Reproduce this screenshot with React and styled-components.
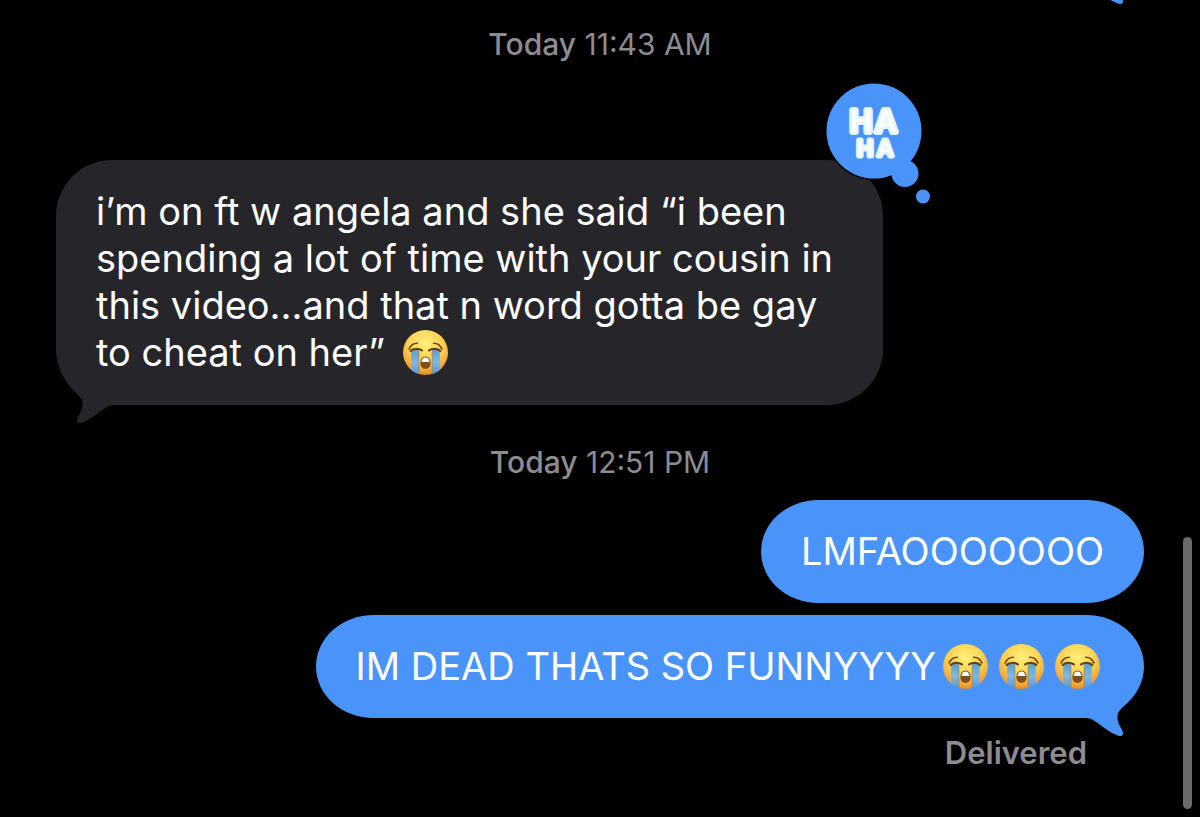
import styled, { createGlobalStyle } from "styled-components";

const messages = [
  { id: 1, type: "time", day: "Today", time: "11:43 AM" },
  {
    id: 2,
    type: "received",
    lines: [
      "i’m on ft w angela and she said “i been",
      "spending a lot of time with your cousin in",
      "this video...and that n word gotta be gay",
      "to cheat on her” ",
    ],
    emojis: 1,
    reaction: true,
    tail: true,
  },
  { id: 3, type: "time", day: "Today", time: "12:51 PM" },
  { id: 4, type: "sent", lines: ["LMFAOOOOOOO"], emojis: 0 },
  {
    id: 5,
    type: "sent",
    lines: ["IM DEAD THATS SO FUNNYYYY"],
    emojis: 3,
    tail: true,
  },
];

const CryingFace = () => (
  <EmojiIcon viewBox="0 0 44 44" role="img" aria-label="loudly crying face">
    <defs>
      <radialGradient id="face" cx="0.5" cy="0.3" r="0.72">
        <stop offset="0" stopColor="#fff07a" />
        <stop offset="0.55" stopColor="#fbd050" />
        <stop offset="0.85" stopColor="#f2a336" />
        <stop offset="1" stopColor="#d98225" />
      </radialGradient>
      <linearGradient id="tear" x1="0" y1="0" x2="0" y2="1">
        <stop offset="0" stopColor="#5a9fd6" />
        <stop offset="0.5" stopColor="#7cb9e6" />
        <stop offset="1" stopColor="#5594dc" />
      </linearGradient>
      <clipPath id="faceClip">
        <circle cx="22" cy="22" r="22" />
      </clipPath>
    </defs>
    <circle cx="22" cy="22" r="22" fill="url(#face)" />
    <g clipPath="url(#faceClip)">
      <path d="M8 19.5H15.5V44H8Z" fill="url(#tear)" />
      <path d="M28.5 19.5H36V44H28.5Z" fill="url(#tear)" />
      <path d="M15.5 21V43M28.5 21V43" stroke="#a87f4c" strokeWidth="0.8" />
    </g>
    <g fill="none" stroke="#6b4212" strokeLinecap="round">
      <path d="M6 18.5C7.5 15 10.5 13 14 13" strokeWidth="1.6" />
      <path d="M38 18.5C36.5 15 33.5 13 30 13" strokeWidth="1.6" />
      <path d="M7.5 20.5C10 17.8 15.5 17.8 18.5 20" strokeWidth="2.2" />
      <path d="M36.5 20.5C34 17.8 28.5 17.8 25.5 20" strokeWidth="2.2" />
    </g>
    <path
      d="M22 26C25.5 26 27 29 27 32.2C27 35.8 25 38 22 38C19 38 17 35.8 17 32.2C17 29 18.5 26 22 26Z"
      fill="#80501c"
    />
    <path
      d="M22 27C24.4 27 25.7 28.8 25.9 31.4H18.1C18.3 28.8 19.6 27 22 27Z"
      fill="#fff"
    />
  </EmojiIcon>
);

const Tail = ({ side }) => (
  <TailIcon viewBox="0 0 60 40" $side={side} aria-hidden="true">
    <path d="M12 -1C18 8 26 11 26.5 18C27 25 23 29 21.5 33C20 37.5 22 39 26 37.5C36 34 44 26 51 22C53 20.5 56 20 60 20V-1Z" />
  </TailIcon>
);

const HahaReaction = () => (
  <ReactionIcon viewBox="0 0 106 122" role="img" aria-label="Haha">
    <circle cx="48" cy="48" r="49" fill="#000" />
    <circle cx="48" cy="48" r="47.5" />
    <circle cx="79" cy="90.5" r="13.5" />
    <circle cx="97" cy="113.5" r="7" />
    <ReactionText x="35 60" y="49" $size={30} $outline={6}>
      HA
    </ReactionText>
    <ReactionText x="39 59" y="73" $size={22} $outline={5}>
      HA
    </ReactionText>
  </ReactionIcon>
);

const Message = ({ message }) => {
  if (message.type === "time") {
    return (
      <Timestamp>
        <strong>{message.day}</strong> {message.time}
      </Timestamp>
    );
  }

  const side = message.type === "sent" ? "right" : "left";

  return (
    <Bubble $side={side}>
      {message.lines.map((line, index) => (
        <Line key={line}>
          {line}
          {index === message.lines.length - 1 &&
            Array.from({ length: message.emojis }, (_, i) => (
              <CryingFace key={i} />
            ))}
        </Line>
      ))}
      {message.tail && <Tail side={side} />}
      {message.reaction && <HahaReaction />}
    </Bubble>
  );
};

const App = () => {
  return (
    <>
      <GlobalStyle />
      <Screen>
        <EarlierTail>
          <Tail side="right" />
        </EarlierTail>
        <Thread>
          {messages.map((message) => (
            <Message key={message.id} message={message} />
          ))}
          <Status>Delivered</Status>
        </Thread>
        <ScrollThumb />
      </Screen>
    </>
  );
};

// --- STYLED COMPONENTS ---

const GlobalStyle = createGlobalStyle`
  * {
    box-sizing: border-box;
  }

  body {
    margin: 0;
    background: #000;
    font-family: Inter, "Liberation Sans", sans-serif;
  }
`;

const Screen = styled.main`
  position: relative;
  min-height: 100vh;
  overflow: hidden;
  background: #000;
`;

const Thread = styled.div`
  display: flex;
  flex-direction: column;
  padding: 24px 56px;
`;

const Timestamp = styled.div`
  align-self: center;
  color: #8c8c91;
  font-size: 30px;
  line-height: 40px;

  strong {
    font-weight: 500;
  }
`;

const Bubble = styled.div`
  position: relative;
  align-self: ${({ $side }) => ($side === "right" ? "flex-end" : "flex-start")};
  padding: ${({ $side }) => ($side === "right" ? "28px 40px" : "28px 50px 29px 40px")};
  border-radius: ${({ $side }) => ($side === "right" ? "58px / 52px" : "56px")};
  background: ${({ $side }) => ($side === "right" ? "#4a94f9" : "#26252a")};
  color: #fff;
  font-size: 38px;
  line-height: 47px;

  ${Timestamp} + & {
    margin-top: ${({ $side }) => ($side === "right" ? "18px" : "96px")};
  }

  & + ${Timestamp} {
    margin-top: 37px;
  }

  & + & {
    margin-top: 12px;
  }
`;

const Line = styled.div`
  display: flex;
  align-items: center;
  height: 47px;
  white-space: pre;
`;

const EmojiIcon = styled.svg`
  width: 45px;
  height: 45px;
  margin: 0 4px 0 7px;
`;

const TailIcon = styled.svg`
  position: absolute;
  bottom: -20px;
  ${({ $side }) => $side}: 0;
  width: 60px;
  height: 40px;
  overflow: visible;
  fill: ${({ $side }) => ($side === "right" ? "#4a94f9" : "#26252a")};
  transform: ${({ $side }) => ($side === "right" ? "scaleX(-1)" : "none")};
`;

const EarlierTail = styled.div`
  position: absolute;
  top: -14px;
  right: 56px;
`;

const ReactionIcon = styled.svg`
  position: absolute;
  top: -77px;
  right: -49px;
  width: 106px;
  height: 122px;
  overflow: visible;
  fill: #4a94f9;
`;

const ReactionText = styled.text`
  fill: #fff;
  stroke: #e6f6fe;
  stroke-width: ${({ $outline }) => $outline}px;
  stroke-linejoin: round;
  paint-order: stroke;
  text-anchor: middle;
  font-size: ${({ $size }) => $size}px;
  font-weight: 500;
`;

const Status = styled.div`
  align-self: flex-end;
  margin: 15px 57px 0 0;
  color: #8c8c91;
  font-size: 31px;
  font-weight: 600;
  line-height: 40px;
`;

const ScrollThumb = styled.div`
  position: absolute;
  right: 8px;
  bottom: 8px;
  width: 9px;
  height: 272px;
  border-radius: 5px;
  background: #6b6b6b;
`;

export default App;
